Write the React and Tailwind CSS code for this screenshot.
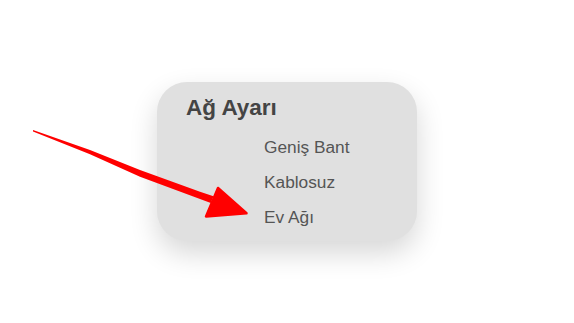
export default function App() {
  return (
    <div className="relative w-[574px] h-[323px] bg-white overflow-hidden" style={{ fontFamily: '"Liberation Sans", Arial, sans-serif' }}>
      <div className="pt-[82px] pl-[157px]">
        <div className="w-[260px] h-[159px] rounded-[30px] bg-[#e0e0e0] shadow-[0_12px_28px_rgba(0,0,0,0.16)] pt-[13px] pl-[29px]">
          <div className="text-[22.5px] leading-[26px] font-bold text-[#444444]">Ağ Ayarı</div>
          <ul className="mt-[9px] ml-[78px] text-[17.3px] leading-[35px] text-[#555555]">
            <li>Geniş Bant</li>
            <li>Kablosuz</li>
            <li>Ev Ağı</li>
          </ul>
        </div>
      </div>
      <svg className="absolute inset-0 pointer-events-none" width="574" height="323" viewBox="0 0 574 323">
        <polygon points="33,130 90,150 140,170 200,191.7 213.5,196.3 210.8,203 200,199 140,176.7 90,154.3 33,131.6" fill="#ff0000" />
        <polygon points="218,188 246.5,213.3 206,216.5" fill="#ff0000" stroke="#ff0000" strokeWidth="2.5" strokeLinejoin="round" />
      </svg>
    </div>
  );
}
